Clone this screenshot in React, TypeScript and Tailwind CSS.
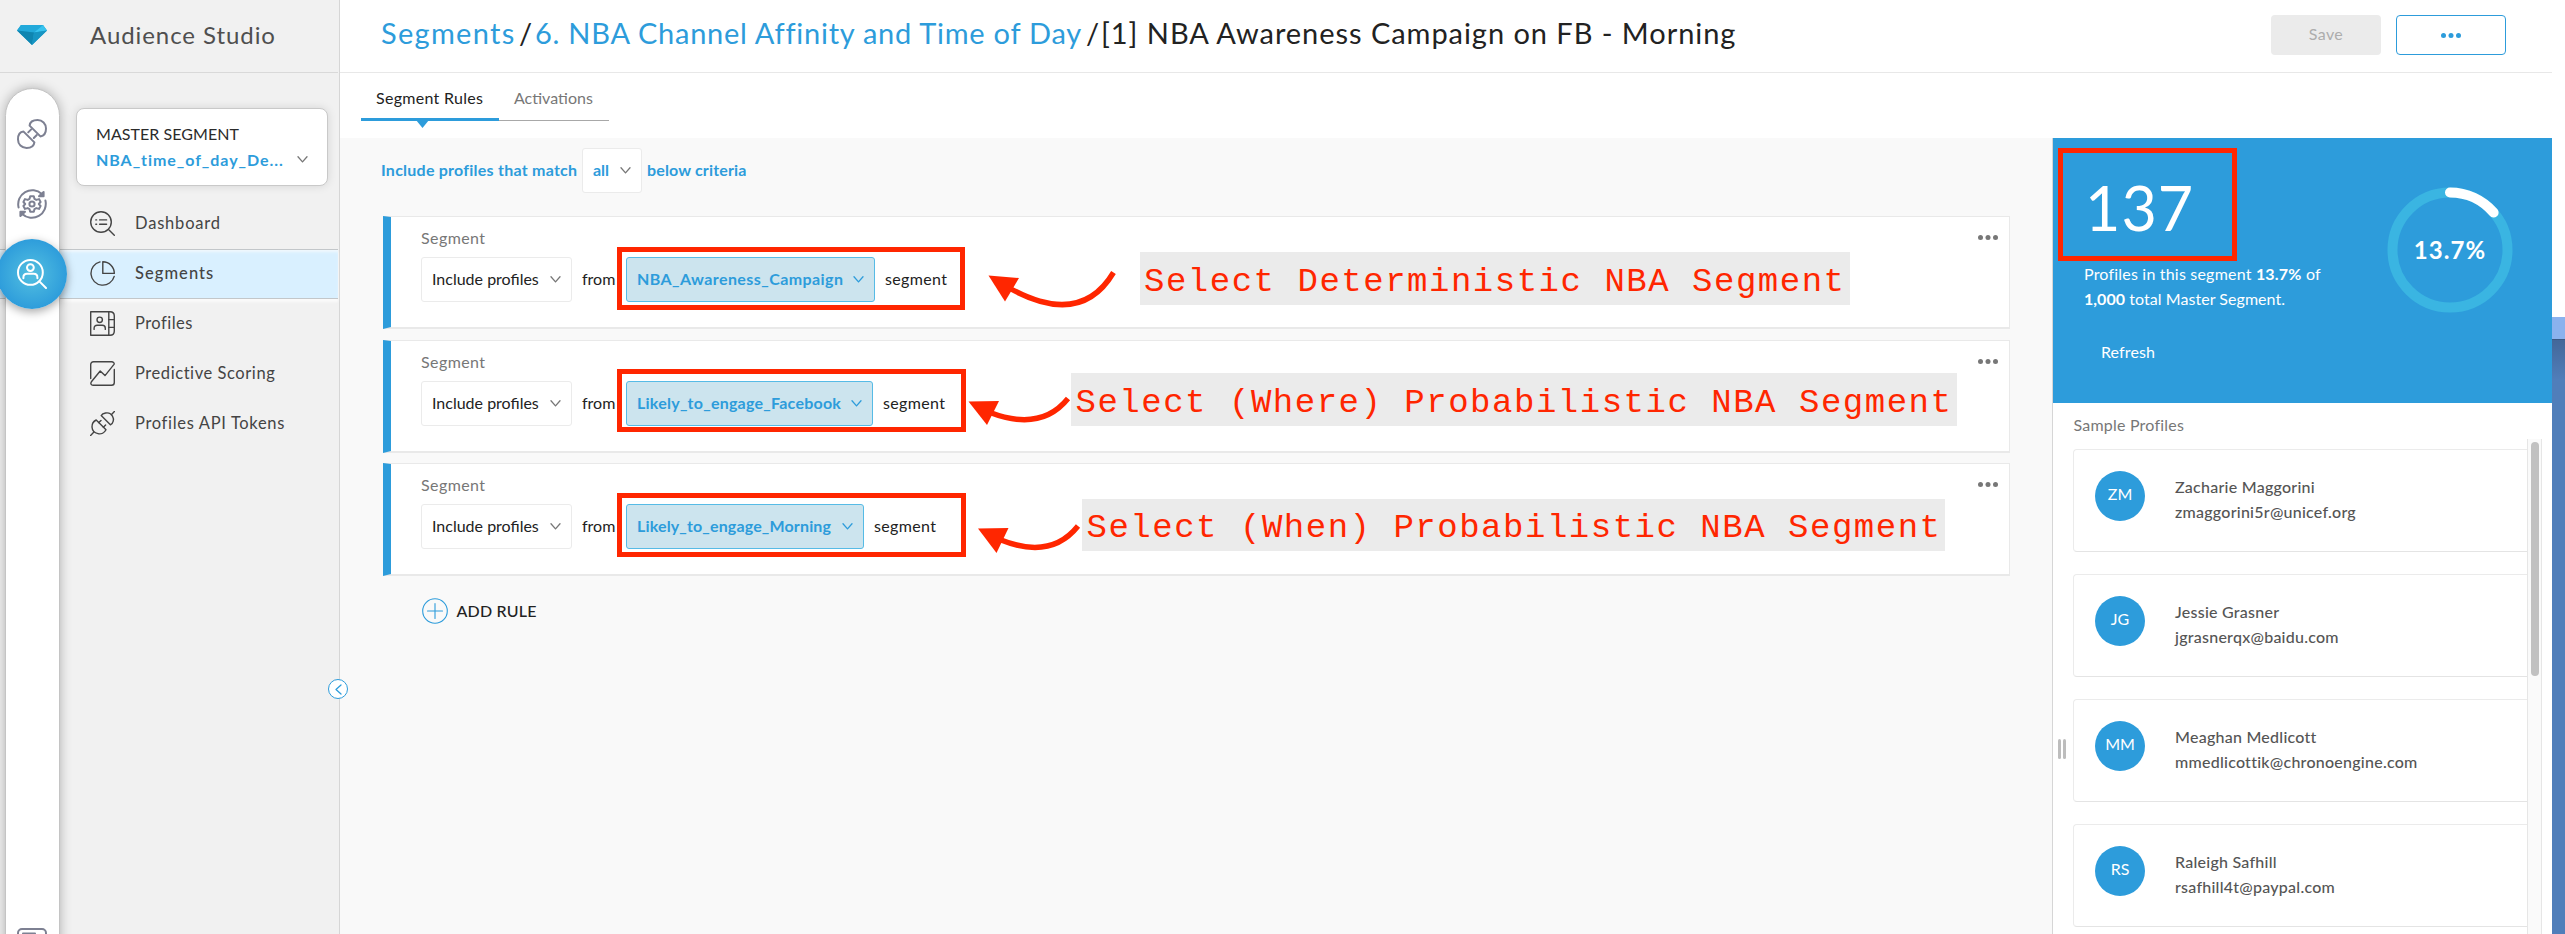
import React from "react";
import type { ReactNode } from "react";

/* ---------- icons ---------- */

function Diamond() {
  return (
    <svg width="30" height="20" viewBox="0 0 30 20">
      <path d="M4 0H26L30 5.5L15 20L0 5.5Z" fill="#1a9fcd" />
      <path d="M4 0H26L17 7.5L0 5.5Z" fill="#22a9da" />
      <path d="M26 0L30 5.5L17 7.5Z" fill="#38c3ef" />
      <path d="M0 5.5L17 7.5L15 20Z" fill="#0f85b0" />
      <path d="M30 5.5L17 7.5L15 20Z" fill="#1795c3" />
    </svg>
  );
}

function RailIcon({ children, color }: { children: ReactNode; color: string }) {
  return (
    <svg width="30" height="30" viewBox="0 0 30 30" fill="none" stroke={color} strokeWidth="2" strokeLinecap="round" strokeLinejoin="round">
      {children}
    </svg>
  );
}

function LinkIcon() {
  return (
    <RailIcon color="#7d8092">
      <path d="M12.6 6.6L23.4 17.4C27.2 17 29 13.6 29 9.6C29 4.6 25.4 1 20.6 1C16.4 1 13 2.8 12.6 6.6Z" />
      <path d="M6.6 12.6L17.4 23.4C17 27.2 13.6 29 9.6 29C4.6 29 1 25.4 1 20.4C1 16.4 2.8 13 6.6 12.6Z" />
      <path d="M11.2 13.4L14.2 10.4M16.8 19L19.8 16" />
    </RailIcon>
  );
}

function GearCycleIcon() {
  return (
    <RailIcon color="#7d8092">
      <path d="M1.6 18.5A14 14 0 0 1 24.8 5" />
      <path d="M28.4 11.5A14 14 0 0 1 5.2 25" />
      <path d="M26.6 3V7.2H22Z" fill="#7d8092" />
      <path d="M3.4 27V22.8H8Z" fill="#7d8092" />
      <path d="M13.2 7.2H16.8L17.5 9.9L19.3 10.9L22 10.1L23.6 13L21.8 15L23.6 17L22 19.9L19.3 19.1L17.5 20.1L16.8 22.8H13.2L12.5 20.1L10.7 19.1L8 19.9L6.4 17L8.2 15L6.4 13L8 10.1L10.7 10.9L12.5 9.9Z" />
      <circle cx="15" cy="15" r="2.6" />
    </RailIcon>
  );
}

function AudienceIcon() {
  return (
    <RailIcon color="#ffffff">
      <circle cx="13.4" cy="13.4" r="12.4" />
      <path d="M22.4 22.4L29 29" />
      <circle cx="13.4" cy="8.6" r="3.4" />
      <path d="M6.4 19.2V18.4C6.4 16.2 8 14.8 10 14.8H16.8C18.8 14.8 20.4 16.2 20.4 18.4V19.2" />
    </RailIcon>
  );
}

function NavIcon({ children }: { children: ReactNode }) {
  return (
    <svg className="shrink-0" width="25" height="25" viewBox="0 0 25 25" fill="none" stroke="#444444" strokeWidth="1.4" strokeLinecap="round" strokeLinejoin="round">
      {children}
    </svg>
  );
}

const dashboardIcon = (
  <NavIcon>
    <circle cx="11" cy="11" r="10.3" />
    <path d="M18.5 18.5L24.3 24.3M9.6 8.9H16.6M9.6 13.3H16.6M5.8 8.9H6.6M5.8 13.3H6.6" />
  </NavIcon>
);
const segmentsIcon = (
  <NavIcon>
    <path d="M10 0.9A11.8 11.8 0 1 0 24.2 15.4" />
    <path d="M12.8 0.7V12.4H24.3A11.6 11.6 0 0 0 12.8 0.7Z" />
  </NavIcon>
);
const profilesIcon = (
  <NavIcon>
    <path d="M0.7 0.7H18.8V24.3H0.7Z" />
    <path d="M18.8 0.7H20C22.6 0.7 24.3 2.6 24.3 5V20C24.3 22.4 22.6 24.3 20 24.3H18.8M18.8 8.6H24.3M18.8 16.4H24.3" />
    <circle cx="9.7" cy="8.8" r="2.7" />
    <path d="M4.1 18.4V17.2C4.1 15.4 5.3 14.2 7.1 14.2H12.3C14.1 14.2 15.3 15.4 15.3 17.2V18.4" />
  </NavIcon>
);
const scoringIcon = (
  <NavIcon>
    <path d="M0.7 17.6V3.5C0.7 1.9 1.9 0.7 3.5 0.7H21.6C23.4 0.7 24.6 2.2 24 3.4L15 14.6L10.2 10L1.4 20.8C0.2 22.6 1.2 24.3 3 24.3H21.5C23.1 24.3 24.3 23.1 24.3 21.5V8.4" />
  </NavIcon>
);
const tokensIcon = (
  <NavIcon>
    <path d="M11.2 4.6L20.4 13.8C23.4 12.4 24.2 8.2 22.6 5.4C21.2 2.6 18.2 1.6 15.6 2C13.6 2.4 12 3.2 11.2 4.6Z" />
    <path d="M6.2 9L16 18.8C14.6 21.6 11.2 23.4 8 22.6C4.8 22 2.2 19.4 2 16C1.9 13 3.4 10.4 6.2 9Z" />
    <path d="M21.3 3.7L24.4 0.6M3.7 21.3L0.6 24.4M8.8 11.6L11 9.4M13.4 16.2L15.6 14" />
  </NavIcon>
);

function Chevron({ color = "#777777" }: { color?: string }) {
  return (
    <svg className="shrink-0" width="11" height="7" viewBox="0 0 11 7" fill="none" stroke={color} strokeWidth="1.3" strokeLinecap="round" strokeLinejoin="round">
      <path d="M1 0.8L5.5 5.9L10 0.8" />
    </svg>
  );
}

function Dots({ color }: { color: string }) {
  return (
    <svg width="20" height="5" viewBox="0 0 20 5" fill={color}>
      <circle cx="2.5" cy="2.5" r="2.5" />
      <circle cx="10" cy="2.5" r="2.5" />
      <circle cx="17.5" cy="2.5" r="2.5" />
    </svg>
  );
}

/* ---------- sidebar ---------- */

function NavItem({ icon, active, children }: { icon: ReactNode; active?: boolean; children: ReactNode }) {
  return (
    <div
      className={
        active
          ? "flex h-[50px] items-center gap-5 border-y border-[#c3c7ca] bg-[#d9f0ff] pl-[90px] shadow-[inset_0_3px_3px_-1px_#f1f8fd,0_3px_2px_#fafafa]"
          : "flex h-[50px] items-center gap-5 pl-[90px]"
      }
    >
      {icon}
      {children}
    </div>
  );
}

function Sidebar() {
  return (
    <aside className="relative flex w-[340px] shrink-0 flex-col border-r border-[#d6d6d6] bg-[#f1f1f1] text-[#444444]">
      <div className="mr-[1px] flex h-[73px] shrink-0 items-center border-b border-[#d9d9d9] pb-[3px] pl-[17px]">
        <Diamond />
        <span className="ml-[43px] text-[24px] tracking-[0.93px] text-[#4f4f4f]">Audience Studio</span>
      </div>

      <nav className="mr-[1px] flex flex-col pt-[35px] text-[16.5px]">
        <div className="mb-[12.5px] ml-[75.5px] flex h-[78px] w-[252px] flex-col justify-center rounded-[8px] border border-[#c9c9c9] bg-white pb-[1px] pl-[19.5px] shadow-[0_0_10px_rgba(0,0,0,0.12)]">
          <span className="text-[16px] leading-[26px] tracking-[0.05px] text-[#2b2b2b]">MASTER SEGMENT</span>
          <span className="flex items-center text-[16px] leading-[26px] font-bold tracking-[0.95px] text-[#2d9cdb]">
            <span className="w-[201px]">NBA_time_of_day_De...</span>
            <Chevron />
          </span>
        </div>
        <NavItem icon={dashboardIcon}><span className="tracking-[0.8px]">Dashboard</span></NavItem>
        <NavItem icon={segmentsIcon} active><span className="font-medium tracking-[1.05px]">Segments</span></NavItem>
        <NavItem icon={profilesIcon}><span className="tracking-[0.46px]">Profiles</span></NavItem>
        <NavItem icon={scoringIcon}><span className="tracking-[0.57px]">Predictive Scoring</span></NavItem>
        <NavItem icon={tokensIcon}><span className="tracking-[0.67px]">Profiles API Tokens</span></NavItem>
      </nav>

      {/* floating product rail */}
      <div className="absolute top-[88px] left-[5px] flex h-[900px] w-[55px] flex-col items-center rounded-t-[28px] border border-[#c4c4c4] bg-white pt-[30px] pr-[1px] shadow-[0_0_12px_rgba(0,0,0,0.28)]">
        <LinkIcon />
        <div className="mt-[40px]"><GearCycleIcon /></div>
        <div className="mt-5 flex size-[70px] shrink-0 items-center justify-center rounded-full bg-[radial-gradient(circle,#4ebbe0_10%,#2d9cdb_72%)] shadow-[0_3px_10px_rgba(0,0,0,0.35)]">
          <AudienceIcon />
        </div>
        <div className="mt-[619px]">
          <RailIcon color="#7d8092">
            <rect x="1" y="1" width="28" height="24" rx="4" />
            <path d="M6 5.5H18" />
          </RailIcon>
        </div>
      </div>

      {/* collapse handle */}
      <div className="absolute top-[679px] left-[328px] z-10 flex size-[20px] items-center justify-center rounded-full border border-[#2d9cdb] bg-white">
        <svg width="7" height="11" viewBox="0 0 7 11" fill="none" stroke="#2d9cdb" strokeWidth="1.3" strokeLinecap="round" strokeLinejoin="round">
          <path d="M6 1L1 5.5L6 10" />
        </svg>
      </div>
    </aside>
  );
}

/* ---------- header ---------- */

function PageHeader() {
  return (
    <header className="flex h-[73px] shrink-0 items-start justify-between border-b border-[#e8e8e8] bg-white pt-[15px] pr-[46px] pl-[41px]">
      <div className="flex text-[29px] leading-[36px] whitespace-nowrap text-[#222222]">
        <span className="w-[138px] tracking-[1.3px] text-[#2d9cdb]">Segments</span>
        <span className="w-[16px]">/</span>
        <span className="w-[551px] tracking-[0.74px] text-[#2d9cdb]">6. NBA Channel Affinity and Time of Day</span>
        <span className="w-[15px]">/</span>
        <span className="tracking-[0.95px]">[1] NBA Awareness Campaign on FB - Morning</span>
      </div>
      <div className="flex gap-[15px]">
        <div className="flex h-10 w-[110px] items-center justify-center rounded-[4px] bg-[#ebebeb] pb-[3px] text-[16px] tracking-[0.39px] text-[#adadad]">Save</div>
        <div className="flex h-10 w-[110px] items-center justify-center rounded-[4px] border border-[#2d9cdb] bg-white">
          <Dots color="#2d9cdb" />
        </div>
      </div>
    </header>
  );
}

function Tabs() {
  return (
    <div className="flex h-[65px] shrink-0 items-start bg-white pl-[21px] text-[16px]">
      <div className="relative flex h-[48px] w-[138px] items-center border-b-[3px] border-[#2d9cdb] pt-[4px] pl-[15px] tracking-[0.3px] text-[#222222]">
        Segment Rules
        <svg className="absolute top-[47px] left-[55px]" width="13" height="8" viewBox="0 0 13 8">
          <path d="M0 0H13L6.5 8Z" fill="#2d9cdb" />
        </svg>
      </div>
      <div className="flex h-[48px] w-[110px] items-center border-b border-[#a8a8a8] pt-[2px] pl-[15px] text-[#777777]">Activations</div>
    </div>
  );
}

/* ---------- rules ---------- */

function RuleCard({ children }: { children: ReactNode }) {
  return (
    <section className="mb-[10.5px] flex h-[113px] w-[1627px] justify-between border-t border-r border-b-2 border-l-[8px] border-[#e9e9e9] border-l-[#2d9cdb] bg-white">
      <div className="flex flex-col pt-[11px] pl-[30px]">
        <span className="text-[16px] leading-[20px] tracking-[0.41px] text-[#777777]">Segment</span>
        <div className="mt-[9px] flex h-[45px] items-center text-[16px] text-[#222222]">
          <div className="flex h-[45px] w-[151px] items-center justify-between rounded-[3px] border border-[#ebebeb] pr-[10px] pl-[10px]">
            <span className="pb-[1px]">Include profiles</span>
            <Chevron />
          </div>
          <span className="w-[54px] pb-[1px] pl-[10px]">from</span>
          {children}
        </div>
      </div>
      <div className="pt-[18px] pr-[11px]"><Dots color="#777777" /></div>
    </section>
  );
}

function SegmentPick({ className, children }: { className: string; children: ReactNode }) {
  return (
    <>
      <div className={`flex h-[45px] items-center justify-between rounded-[3px] border border-[#56bbe6] bg-[#cce4ee] pr-[10px] pl-[10px] font-bold text-[#2d9cdb] ${className}`}>
        <span className="pb-[1px]">{children}</span>
        <Chevron color="#2d9cdb" />
      </div>
      <span className="pb-[1px] pl-[10px] tracking-[0.36px]">segment</span>
    </>
  );
}

function Rules() {
  return (
    <div className="flex w-[1712px] shrink-0 flex-col bg-[#f9f9f9] pl-[43px]">
      <div className="mt-[10px] mb-[23px] -ml-[2px] flex h-[45px] items-center text-[16px] font-bold whitespace-nowrap text-[#2d9cdb]">
        <span className="w-[201px] pb-[1px] tracking-[0.24px]">Include profiles that match</span>
        <div className="flex h-[45px] w-[60px] items-center justify-between rounded-[3px] border border-[#ebebeb] bg-white px-[10px]">
          <span className="pb-[1px]">all</span>
          <Chevron />
        </div>
        <span className="pb-[1px] pl-[5px] tracking-[0.15px]">below criteria</span>
      </div>

      <RuleCard>
        <SegmentPick className="w-[249px] tracking-[0.43px]">NBA_Awareness_Campaign</SegmentPick>
      </RuleCard>
      <RuleCard>
        <SegmentPick className="w-[247px] tracking-[0.24px]">Likely_to_engage_Facebook</SegmentPick>
      </RuleCard>
      <RuleCard>
        <SegmentPick className="w-[238px] tracking-[0.15px]">Likely_to_engage_Morning</SegmentPick>
      </RuleCard>

      <div className="mt-[11.5px] flex items-center gap-[9px] pl-[38.5px] text-[16px] font-medium text-[#222222]">
        <svg width="26" height="26" viewBox="0 0 26 26" fill="none" stroke="#2d9cdb" strokeWidth="1.1" strokeLinecap="round">
          <circle cx="13" cy="13" r="12.3" />
          <path d="M13 5.5V20.5M5.5 13H20.5" />
        </svg>
        <span className="pb-[1px] tracking-[0.2px]">ADD RULE</span>
      </div>
    </div>
  );
}

/* ---------- right panel ---------- */

const profiles = [
  { initials: "ZM", name: "Zacharie Maggorini", email: "zmaggorini5r@unicef.org" },
  { initials: "JG", name: "Jessie Grasner", email: "jgrasnerqx@baidu.com" },
  { initials: "MM", name: "Meaghan Medlicott", email: "mmedlicottik@chronoengine.com" },
  { initials: "RS", name: "Raleigh Safhill", email: "rsafhill4t@paypal.com" },
];

function Ring() {
  return (
    <div className="mt-[49px] mr-[39px] grid size-[126px] place-items-center">
      <svg className="col-start-1 row-start-1" width="126" height="126" viewBox="0 0 126 126" fill="none" strokeWidth="10">
        <circle cx="63" cy="63" r="57.5" stroke="#3ab5e2" />
        <circle cx="63" cy="63" r="57.5" stroke="#ffffff" strokeLinecap="round" pathLength="100" strokeDasharray="13.7 86.3" transform="rotate(-90 63 63)" />
      </svg>
      <span className="col-start-1 row-start-1 text-[24px] font-bold tracking-[1.1px]">13.7%</span>
    </div>
  );
}

function Panel() {
  return (
    <div className="flex w-[500px] shrink-0 flex-col border-l border-[#d6d6d6] bg-white">
      <div className="flex h-[265px] shrink-0 justify-between bg-[#2d9cdb] text-white">
        <div className="flex flex-col pt-[39px] pl-[31px] text-[16px] leading-[25px] whitespace-nowrap">
          <span className="pl-[1px] text-[61px] leading-[61px] tracking-[1px]">137</span>
          <span className="mt-[23px] tracking-[0.2px]">Profiles in this segment <b>13.7%</b> of</span>
          <span className="tracking-[0.05px]"><b>1,000</b> total Master Segment.</span>
          <span className="mt-[28px] pl-[17px] tracking-[0.12px]">Refresh</span>
        </div>
        <Ring />
      </div>

      <div className="flex h-[36px] shrink-0 items-end pl-[20.5px] text-[16px] leading-[20px] tracking-[0.21px] text-[#777777]">
        <span className="pb-[4px]">Sample Profiles</span>
      </div>

      <div className="flex h-[495px]">
        <div className="flex w-[20px] items-center gap-[2px] pl-[5px]">
          <div className="mb-[-125px] h-[20px] w-[3px] rounded-full bg-[#bdbdbd]" />
          <div className="mb-[-125px] h-[20px] w-[3px] rounded-full bg-[#bdbdbd]" />
        </div>
        <div className="flex w-[454px] flex-col gap-[22px] overflow-hidden pt-[10px]">
          {profiles.map((p) => (
            <div key={p.initials} className="flex h-[103px] shrink-0 rounded-l-[4px] border-y border-l border-[#ebebeb] border-b-[#e4e4e4] pt-[21px] pl-[21px]">
              <div className="flex size-[50px] items-center justify-center rounded-full bg-[#2d9cdb] pb-[4px] text-[16px] text-white">{p.initials}</div>
              <div className="ml-[30px] flex flex-col pt-[3px] text-[16px] leading-[25px] font-medium tracking-[0.25px] text-[#555555]">
                <span>{p.name}</span>
                <span>{p.email}</span>
              </div>
            </div>
          ))}
        </div>
        <div className="w-[15px] border-x border-[#e6e6e6] bg-[#fafafa] px-[2.5px] pt-[3px]">
          <div className="h-[234px] w-[8px] rounded-full bg-[#c1c1c1]" />
        </div>
      </div>
    </div>
  );
}

/* ---------- annotations ---------- */

function Annotations() {
  return (
    <div className="pointer-events-none absolute inset-0 z-20 text-[#ff2600]">
      <div className="absolute top-[247px] left-[617px] h-[63px] w-[348px] border-[5px] border-[#ff2600]" />
      <div className="absolute top-[369px] left-[617px] h-[63px] w-[349px] border-[5px] border-[#ff2600]" />
      <div className="absolute top-[493px] left-[617px] h-[64px] w-[349px] border-[5px] border-[#ff2600]" />
      <div className="absolute top-[147.5px] left-[2058px] h-[113px] w-[178.5px] border-[5px] border-[#ff2600]" />

      <svg className="absolute inset-0" width="2565" height="934" viewBox="0 0 2565 934" fill="none" stroke="#ff2600">
        <path d="M1011 289Q1081 327 1113.5 272.5" strokeWidth="5.4" />
        <path d="M988.5 275.5L1019 278L1005 301.5Z" fill="#ff2600" stroke="none" />
        <path d="M990 412.5Q1041 432 1068 398.5" strokeWidth="5.4" />
        <path d="M968.5 401.5L999 401L987 425Z" fill="#ff2600" stroke="none" />
        <path d="M1001 540Q1051 560 1078 526" strokeWidth="5.4" />
        <path d="M978 528.5L1008.5 528L996.5 553Z" fill="#ff2600" stroke="none" />
      </svg>

      <div className="absolute top-[252px] left-[1140px] h-[53px] w-[710px] bg-[#ebebeb] pl-[4px] font-['Liberation_Mono'] text-[34px] leading-[60px] tracking-[1.52px] whitespace-nowrap">Select Deterministic NBA Segment</div>
      <div className="absolute top-[373px] left-[1071px] h-[53px] w-[885.5px] bg-[#ebebeb] pl-[4.5px] font-['Liberation_Mono'] text-[34px] leading-[60px] tracking-[1.52px] whitespace-nowrap">Select (Where) Probabilistic NBA Segment</div>
      <div className="absolute top-[499px] left-[1082px] h-[52px] w-[862.5px] bg-[#ebebeb] pl-[4.5px] font-['Liberation_Mono'] text-[34px] leading-[58px] tracking-[1.52px] whitespace-nowrap">Select (When) Probabilistic NBA Segment</div>
    </div>
  );
}

export default function App() {
  return (
    <div className="relative flex h-[934px] w-[2565px] overflow-hidden bg-white font-['Lato',sans-serif]">
      <Sidebar />
      <main className="flex w-[2212px] shrink-0 flex-col">
        <PageHeader />
        <Tabs />
        <div className="flex flex-1">
          <Rules />
          <Panel />
        </div>
      </main>
      <div className="flex w-[13px] flex-col pt-[317px]">
        <div className="h-[22px] shrink-0 bg-[#8ab2ee]" />
        <div className="flex-1 border-t border-[#3b5a85] bg-[linear-gradient(#436799,#507eba_40px)]" />
      </div>
      <Annotations />
    </div>
  );
}
